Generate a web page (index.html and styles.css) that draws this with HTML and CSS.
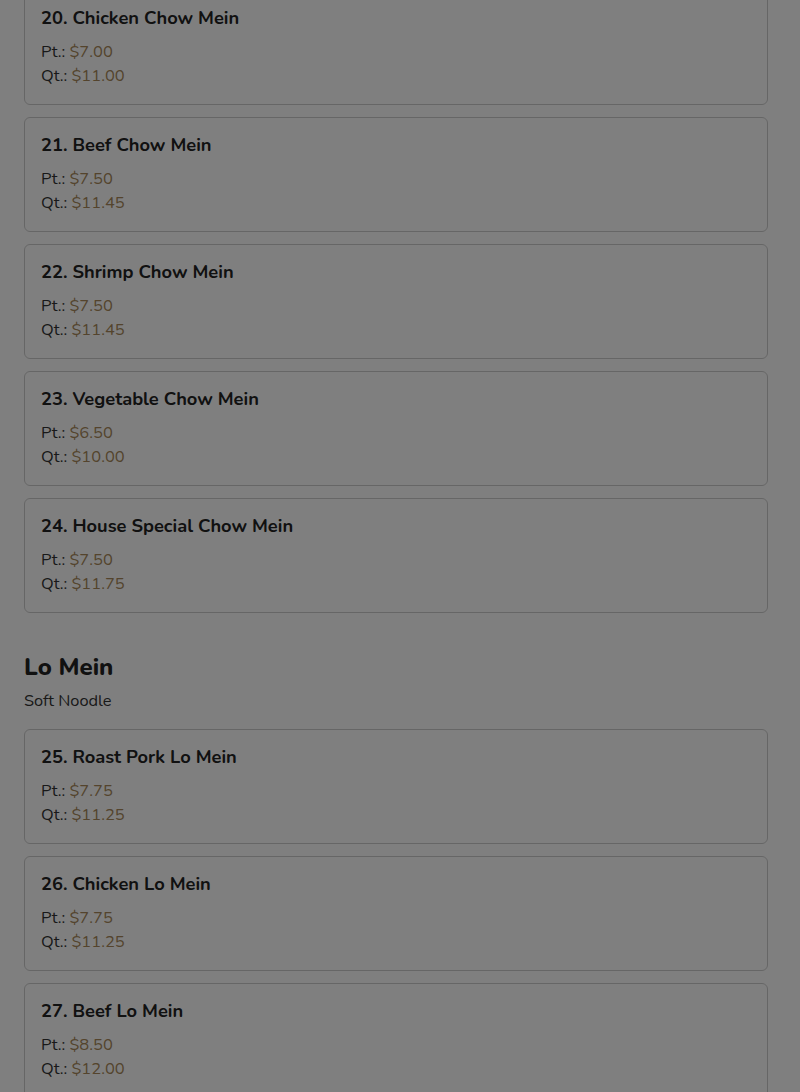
FILE: index.html
```html
<!DOCTYPE html>
<html lang="en">
<head>
<meta charset="utf-8">
<title>Menu</title>
<link rel="stylesheet" href="styles.css">
</head>
<body>
<main class="menu">
  <section class="section">
    <div class="items">
      <div class="card"><h3 class="name">20. Chicken Chow Mein</h3><div class="price">Pt.: <span class="amt">$7.00</span></div><div class="price">Qt.: <span class="amt">$11.00</span></div></div>
      <div class="card"><h3 class="name">21. Beef Chow Mein</h3><div class="price">Pt.: <span class="amt">$7.50</span></div><div class="price">Qt.: <span class="amt">$11.45</span></div></div>
      <div class="card"><h3 class="name">22. Shrimp Chow Mein</h3><div class="price">Pt.: <span class="amt">$7.50</span></div><div class="price">Qt.: <span class="amt">$11.45</span></div></div>
      <div class="card"><h3 class="name">23. Vegetable Chow Mein</h3><div class="price">Pt.: <span class="amt">$6.50</span></div><div class="price">Qt.: <span class="amt">$10.00</span></div></div>
      <div class="card"><h3 class="name">24. House Special Chow Mein</h3><div class="price">Pt.: <span class="amt">$7.50</span></div><div class="price">Qt.: <span class="amt">$11.75</span></div></div>
    </div>
  </section>
  <section class="section">
    <h2 class="section-title">Lo Mein</h2>
    <p class="section-desc">Soft Noodle</p>
    <div class="items">
      <div class="card"><h3 class="name">25. Roast Pork Lo Mein</h3><div class="price">Pt.: <span class="amt">$7.75</span></div><div class="price">Qt.: <span class="amt">$11.25</span></div></div>
      <div class="card"><h3 class="name">26. Chicken Lo Mein</h3><div class="price">Pt.: <span class="amt">$7.75</span></div><div class="price">Qt.: <span class="amt">$11.25</span></div></div>
      <div class="card"><h3 class="name">27. Beef Lo Mein</h3><div class="price">Pt.: <span class="amt">$8.50</span></div><div class="price">Qt.: <span class="amt">$12.00</span></div></div>
    </div>
  </section>
</main>
<div class="overlay"></div>
</body>
</html>
```
FILE: styles.css
```css
html, body {
  margin: 0;
  padding: 0;
  background: #ffffff;
  overflow: hidden;
  height: 1092px;
}
body {
  font-family: "Nunito", "Lato", "Open Sans", sans-serif;
  color: #222222;
}
.menu {
  padding: 0 32px 0 24px;
  margin-top: -10px;
}
.section + .section {
  margin-top: 37px;
}
.section-title {
  margin: 0;
  font-size: 24px;
  line-height: 34px;
  font-weight: 800;
  color: #222;
}
.section-desc {
  margin: 5px 0 16px;
  font-size: 16.4px;
  line-height: 24px;
  color: #333;
}
.items {
  display: flex;
  flex-direction: column;
  gap: 12px;
}
.card {
  border: 1px solid #cdcdcd;
  border-radius: 6px;
  padding: 16px;
  background: #fff;
}
.name {
  margin: 0 0 10px;
  font-size: 18.3px;
  line-height: 23px;
  font-weight: 700;
  color: #222;
}
.price {
  font-size: 16.5px;
  line-height: 24px;
  color: #333;
}
.amt {
  color: #a8895a;
}
.overlay {
  position: fixed;
  inset: 0;
  background: rgba(0, 0, 0, 0.5);
}
```
